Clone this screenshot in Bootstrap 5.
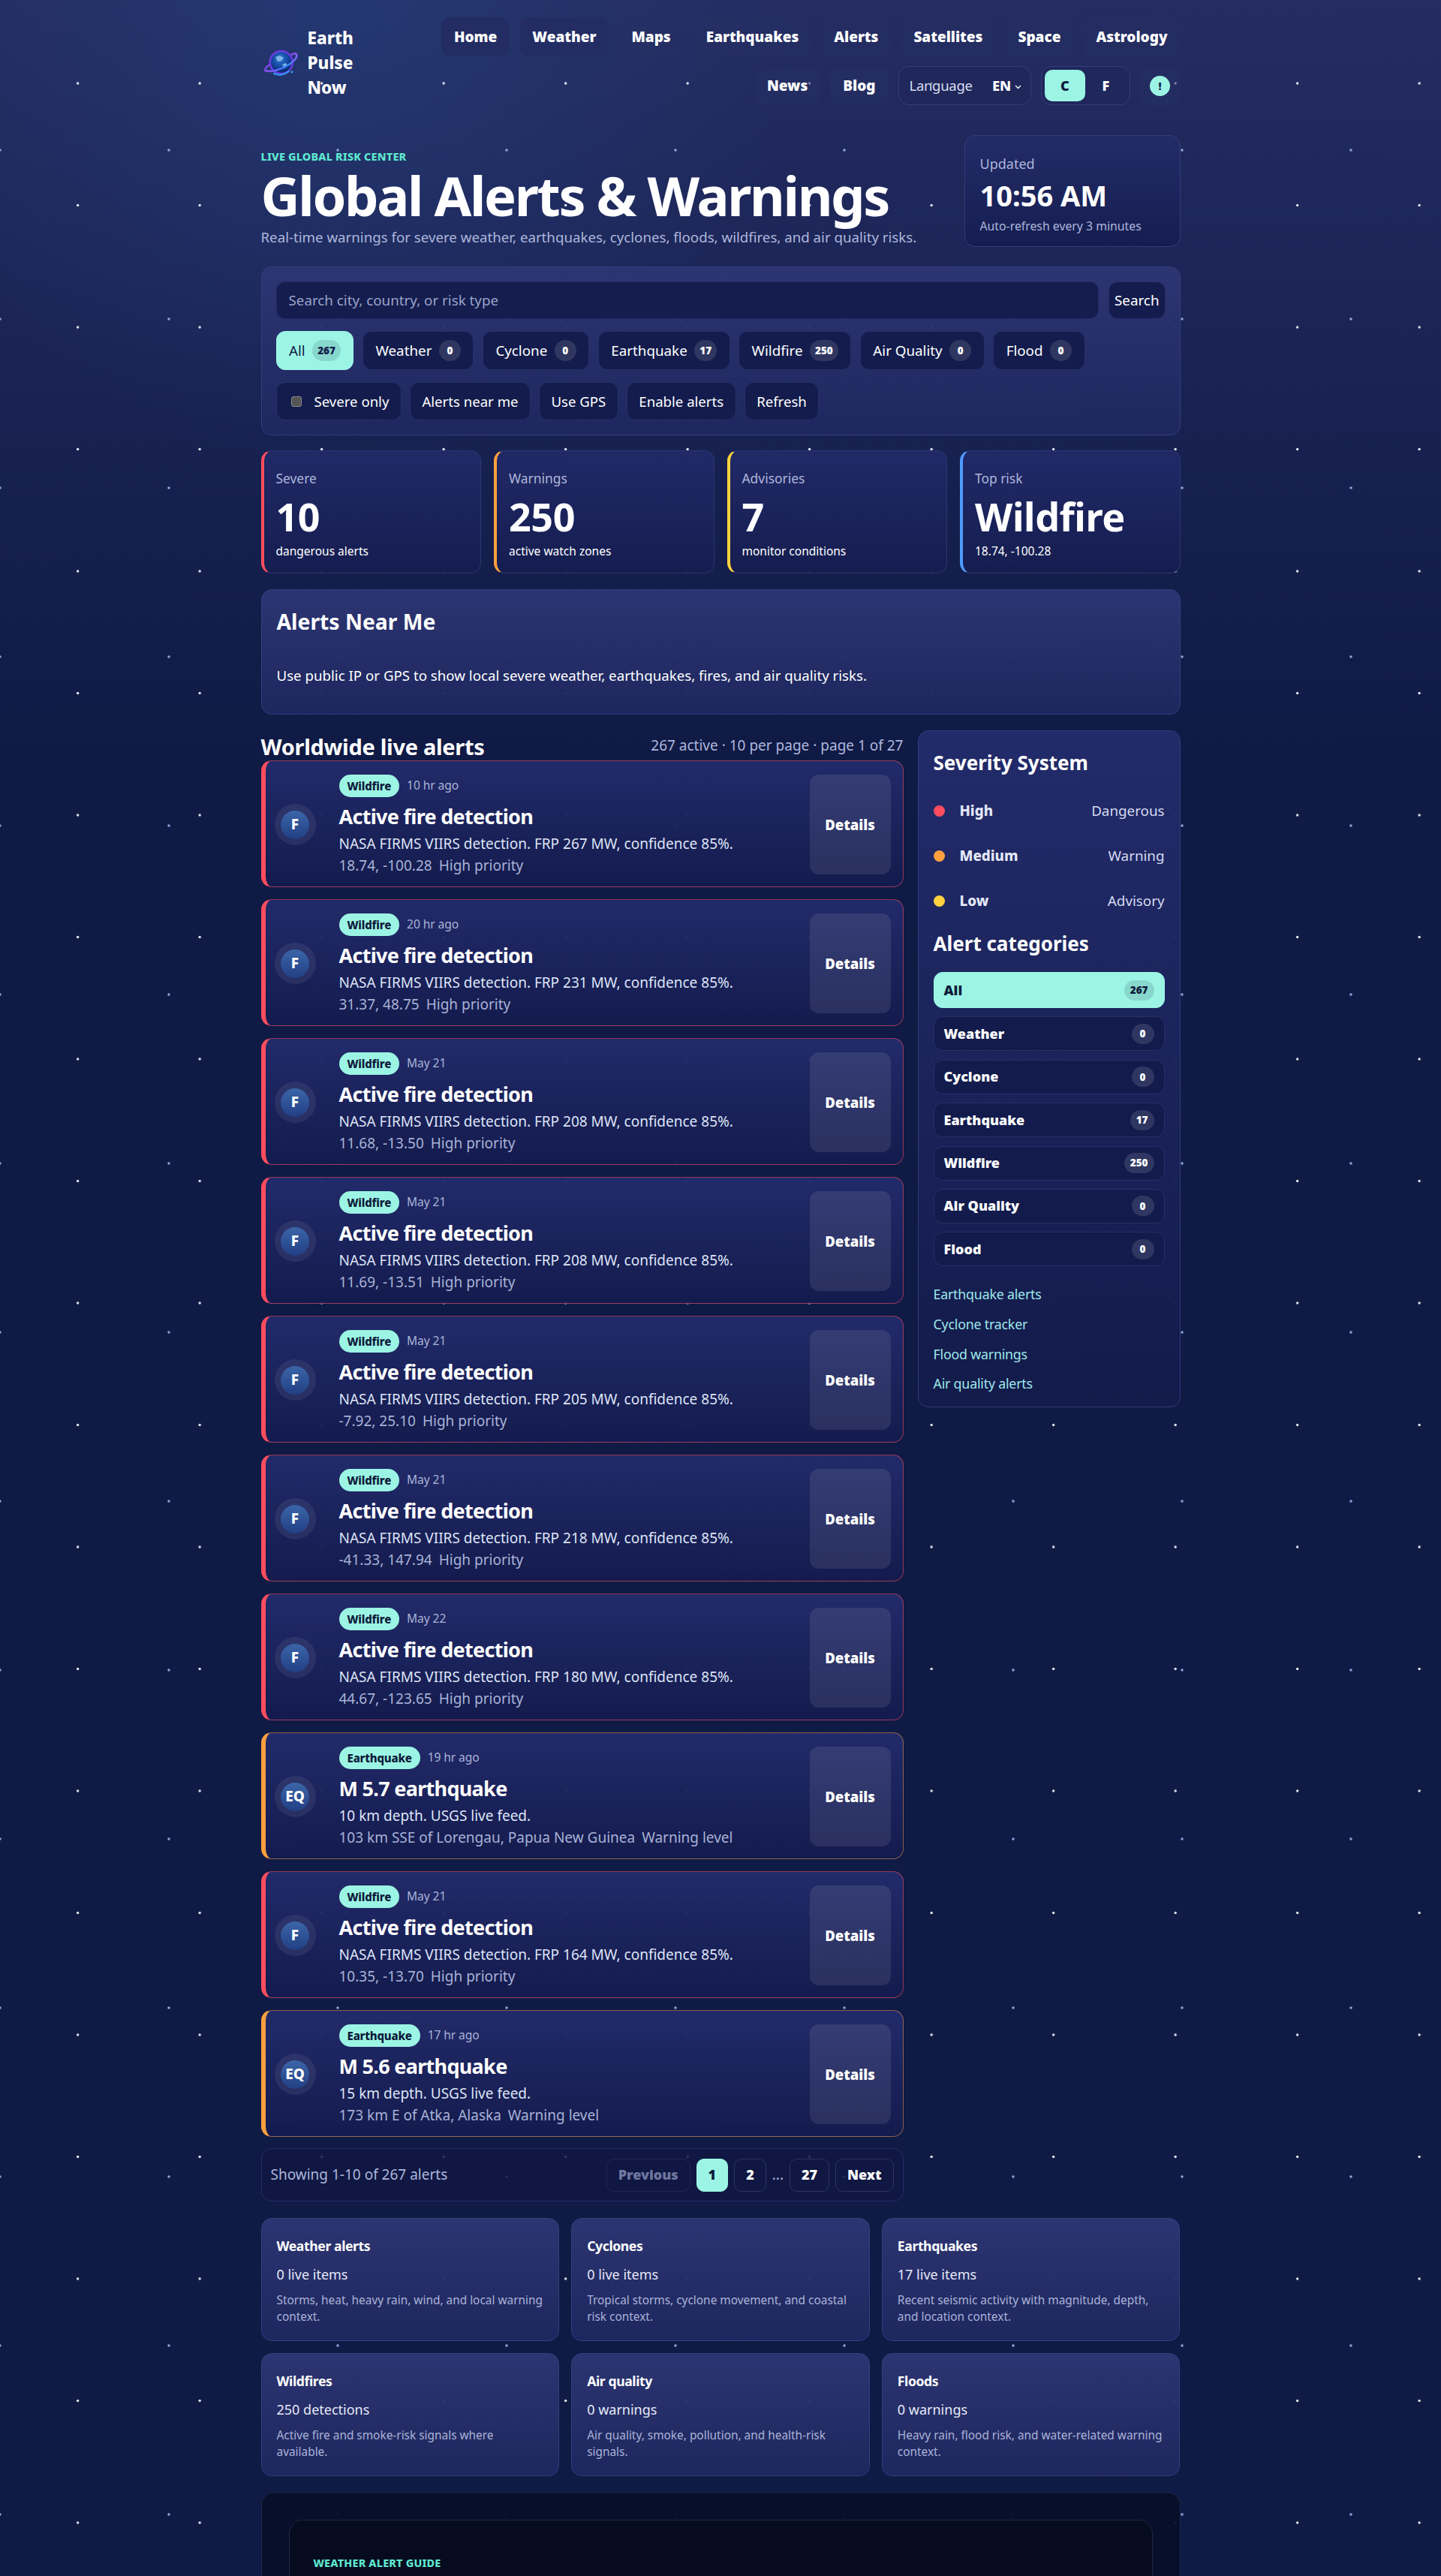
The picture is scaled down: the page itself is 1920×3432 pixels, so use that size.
<!DOCTYPE html>
<html lang="en">
<head>
  <meta charset="UTF-8" />
  <title>Global Alerts &amp; Warnings</title>
  <link href="https://cdn.jsdelivr.net/npm/bootstrap@5.3.3/dist/css/bootstrap.min.css" rel="stylesheet" />
  <style>
    html, body { height: 3432px; overflow: hidden; }
    body {
      font-family: "Noto Sans", "Open Sans", sans-serif;
      color: #fff;
      background-color: #0f1a45;
      background-image:
        radial-gradient(circle at 50% 50%, #f4f6ff 0, #f4f6ff 1px, rgba(255,255,255,0) 2.2px),
        radial-gradient(circle at 50% 50%, #9db8f0 0, #9db8f0 1px, rgba(157,184,240,0) 2.2px),
        radial-gradient(circle at 450px 0, rgba(38,70,135,.45), rgba(38,70,135,0) 620px),
        linear-gradient(180deg, #242c61 0, #0f1a45 1000px);
      background-size: 162.5px 162.5px, 225px 225px, auto, auto;
      background-position: 22.4px 29.75px, -112.5px 87.5px, 0 0, 0 0;
      background-repeat: repeat, repeat, no-repeat, no-repeat;
    }
    .page-wrap { width: 1225px; margin: 0 auto; }

    /* header */
    .site-head { padding-top: 23px; height: 180px; }
    .brand-box { margin-top: 11px; }
    .brand-name { font-size: 22.5px; font-weight: 800; line-height: 33px; margin-left: 13px; }
    .site-nav { width: 989px; row-gap: 13px; column-gap: 13px; }
    .nav-pill {
      height: 52px; padding: 0 17px; border-radius: 12px;
      background: rgba(38,47,100,.55); color: #fff; font-size: 19px; font-weight: 900;
      text-decoration: none; display: flex; align-items: center;
    }
    .nav-pill.is-current { background: #232d64; }
    .lang-box, .unit-box {
      height: 52px; border: 1px solid #343e78; border-radius: 14px; background: rgba(30,38,90,.6);
      display: flex; align-items: center;
    }
    .lang-box { width: 177px; padding: 0 12px 0 14px; font-size: 18.5px; color: #d8ddf0; justify-content: space-between; letter-spacing: -.3px; }
    .lang-box b { color: #fff; font-weight: 800; }
    .unit-box { width: 119px; padding: 0 4px; }
    .unit-btn { width: 55px; height: 42px; border-radius: 10px; font-weight: 900; font-size: 18px; display: flex; align-items: center; justify-content: center; }
    .unit-btn.is-on { background: #9cf5e4; color: #0d1a3a; }
    .info-pill { width: 54px; height: 52px; border-radius: 12px; background: rgba(38,47,100,.55); display: flex; align-items: center; justify-content: center; }
    .info-dot { width: 27px; height: 27px; border-radius: 50%; background: #9cf5e4; color: #10204a; font-size: 14px; font-weight: 900; display: flex; align-items: center; justify-content: center; }

    /* hero */
    .hero-row { height: 175px; }
    .kicker { color: #5fe8d0; font-size: 14.4px; font-weight: 800; text-transform: uppercase; letter-spacing: .2px; line-height: 18px; }
    .hero-title { font-size: 72px; font-weight: 700; line-height: 76px; letter-spacing: -2.35px; margin: 4px 0 0; }
    .hero-sub { font-size: 18.7px; color: #aeb6dc; line-height: 24px; margin: 6px 0 0; }
    .updated-box {
      width: 288px; height: 149px; padding: 20px 20px; border: 1px solid #323c78; border-radius: 14px;
      background: linear-gradient(180deg, #232c68, #151d50);
    }
    .updated-label { font-size: 18px; color: #aeb6dc; line-height: 34px; }
    .updated-time { font-size: 38px; font-weight: 700; line-height: 50px; }
    .updated-note { font-size: 15.8px; color: #aeb6dc; line-height: 32px; }

    /* panels */
    .soft-panel { background: linear-gradient(180deg, rgba(45,54,115,.96), rgba(30,39,95,.96)); border: 1px solid #343e7c; border-radius: 14px; }
    .search-panel { height: 225px; padding: 19px; }
    .search-field { flex: 1; height: 50px; background: #141d4e; border: 1px solid #1f2960; border-radius: 12px; color: #fff; padding: 0 16px; font-size: 18.8px; }
    .search-field::placeholder { color: #9aa3c8; }
    .chip {
      height: 52px; padding: 0 16.5px; border-radius: 12px; background: #131c4c; border: 1px solid #263069;
      color: #fff; font-size: 18.8px; display: flex; align-items: center; gap: 9.5px;
    }
    .chip.is-on { background: #9cf5e4; border-color: #9cf5e4; color: #10204a; }
    .chip-count { min-width: 29px; height: 28px; padding: 0 7px; border-radius: 14px; background: rgba(255,255,255,.12); font-size: 13.5px; font-weight: 900; display: flex; align-items: center; justify-content: center; }
    .chip.is-on .chip-count { background: rgba(16,32,74,.14); }
    .search-btn { height: 50px; padding: 0 7px; }
    .tool-chip { height: 51px; padding: 0 15.5px; font-size: 18.6px; }
    .tick { appearance: none; width: 14px; height: 14px; margin: 0 7px 0 4px; background: #555; border: 1px solid #8a8a8a; border-radius: 3px; }

    .stat-grid { display: grid; grid-template-columns: repeat(4, 1fr); gap: 17px; margin-top: 20px; }
    .stat-tile {
      height: 164px; padding: 18px 16px; border: 1px solid #2c3670; border-left: 4px solid; border-radius: 14px;
      background: linear-gradient(180deg, rgba(33,42,104,.96), rgba(21,29,80,.96));
    }
    .stat-label { font-size: 17.4px; color: #aeb6dc; line-height: 36px; }
    .stat-num { font-size: 52px; font-weight: 700; line-height: 66px; letter-spacing: -.4px; }
    .stat-note { font-size: 15.5px; line-height: 22px; margin-top: 2px; }

    .near-panel { height: 167px; margin-top: 21px; padding: 20px; }
    .near-panel h2 { font-size: 28.3px; font-weight: 700; line-height: 44px; margin: 0 0 36px; }
    .near-panel p { font-size: 18.7px; margin: 0; line-height: 28px; }

    /* alerts */
    .main-grid { display: grid; grid-template-columns: 856px 350px; gap: 19px; margin-top: 21px; align-items: start; }
    .list-head { height: 40px; }
    .list-head h2 { font-size: 29px; font-weight: 700; margin: 0; line-height: 40px; letter-spacing: -.3px; position: relative; top: 2px; }
    .list-count { font-size: 19px; color: #aeb6dc; }
    .alert-stack { display: flex; flex-direction: column; gap: 16px; }
    .alert-tile {
      height: 169px; padding: 18px 16px 16px 12px; display: flex; align-items: center;
      border: 1px solid; border-left-width: 6px; border-radius: 14px;
      background: linear-gradient(180deg, rgba(35,44,107,.97), rgba(20,28,78,.97));
    }
    .tone-high { border-color: rgba(255,77,94,.55); border-left-color: #ff4d5e; }
    .tone-warn { border-color: rgba(255,160,70,.5); border-left-color: #ffa03f; }
    .alert-ico { width: 55px; height: 55px; border-radius: 50%; background: rgba(255,255,255,.07); display: flex; align-items: center; justify-content: center; flex: none; }
    .alert-ico span { width: 38px; height: 38px; border-radius: 50%; background: linear-gradient(180deg, #3b65a8, #223f84); display: flex; align-items: center; justify-content: center; font-size: 19px; font-weight: 800; }
    .alert-body { flex: 1; margin-left: 31px; align-self: stretch; min-width: 0; }
    .tag-line { display: flex; align-items: center; gap: 10px; height: 30px; }
    .tag-pill { height: 30px; padding: 0 11px; border-radius: 15px; background: #9cf5e4; color: #0d1a3a; font-size: 15px; font-weight: 800; letter-spacing: -.2px; display: flex; align-items: center; }
    .tag-time { font-size: 15.6px; color: #aab3d8; letter-spacing: -.1px; }
    .alert-name { font-size: 27px; font-weight: 700; line-height: 38px; margin: 7px 0 3px; letter-spacing: -.7px; }
    .alert-desc { font-size: 19px; color: #dfe4f6; line-height: 28px; margin-top: 1px; }
    .alert-meta { font-size: 19px; color: #a9b2d6; line-height: 30px; }
    .alert-meta span + span { margin-left: 9px; }
    .details-btn { width: 108px; height: 133px; align-self: flex-start; border-radius: 12px; background: rgba(255,255,255,.09); color: #fff; font-weight: 900; font-size: 18.5px; display: flex; align-items: center; justify-content: center; text-decoration: none; flex: none; }

    .pager-bar { height: 71px; margin-top: 15px; padding: 0 12px; border: 1px solid #263069; border-radius: 14px; background: rgba(15,23,66,.85); color: #aeb6dc; font-size: 19px; }
    .page-key { height: 44px; padding: 0 15px; border: 1px solid #2b3569; border-radius: 10px; color: #fff; font-weight: 900; font-size: 18px; display: flex; align-items: center; justify-content: center; }
    .page-key.is-on { background: #9cf5e4; border-color: #9cf5e4; color: #0d1a3a; }
    .page-key.is-off { color: #6f779f; border-color: #1e2758; }

    /* sidebar */
    .side-panel { height: 902px; padding: 20px; border: 1px solid #313b78; border-radius: 14px; background: linear-gradient(180deg, rgba(35,44,107,.97), rgba(19,27,75,.97)); }
    .side-panel h3 { font-size: 26px; font-weight: 700; line-height: 44px; margin: 0; }
    .level-wrap { margin: 12px 0 5px; }
    .level-row { height: 60px; display: flex; align-items: center; font-size: 18.8px; color: #d5daf0; }
    .level-dot { width: 15px; height: 15px; border-radius: 50%; margin-right: 20px; }
    .level-row b { font-weight: 800; color: #e4e8f8; flex: 1; }
    .cat-list { display: flex; flex-direction: column; gap: 11.4px; margin-top: 16px; }
    .cat-item { height: 46px; padding: 0 13px; border: 1px solid #263069; border-radius: 12px; background: #121b4c; font-size: 18px; font-weight: 900; display: flex; align-items: center; justify-content: space-between; }
    .cat-item.is-on { background: #9cf5e4; border-color: #9cf5e4; color: #0d1a3a; height: 48px; }
    .cat-count { min-width: 30px; height: 27px; padding: 0 8px; border-radius: 14px; background: rgba(255,255,255,.12); font-size: 13.5px; display: flex; align-items: center; justify-content: center; }
    .cat-item.is-on .cat-count { background: rgba(16,32,74,.14); }
    .side-links { margin-top: 18px; display: flex; flex-direction: column; }
    .side-links a { color: #9fe8ea; text-decoration: none; font-size: 17.8px; line-height: 39.6px; letter-spacing: -.2px; }

    /* info cards */
    .info-grid { display: grid; grid-template-columns: repeat(3, 1fr); gap: 16px; margin-top: 22px; }
    .info-tile { height: 164px; padding: 20px; }
    .info-tile h4 { font-size: 17.6px; font-weight: 700; line-height: 32px; margin: 0; letter-spacing: -.4px; }
    .info-stat { font-size: 18px; line-height: 32px; margin-top: 6px; color: #e6e9f8; }
    .info-text { font-size: 15.4px; line-height: 22px; margin: 8px 0 0; color: #aab3d8; }

    .guide-outer { height: 160px; margin-top: 21px; padding: 36px 36px 0; background: rgba(8,15,40,.94); border: 1px solid #1e2848; border-radius: 18px; }
    .guide-inner { height: 200px; padding: 48px 32px; background: #060b20; border: 1px solid #1c2644; border-radius: 18px; }
  </style>
</head>
<body>
  <div class="page-wrap">

    <!-- Header -->
    <header class="site-head d-flex justify-content-between align-items-start">
      <div class="brand-box d-flex align-items-center">
        <svg width="45" height="36" viewBox="0 0 45 36" class="ms-1" aria-label="Earth Pulse Now logo">
          <defs>
            <radialGradient id="globeFill" cx="45%" cy="35%" r="70%">
              <stop offset="0" stop-color="#2a7ad6" />
              <stop offset=".6" stop-color="#123f96" />
              <stop offset="1" stop-color="#071c55" />
            </radialGradient>
            <linearGradient id="ringStroke" x1="0" y1="1" x2="1" y2="0">
              <stop offset="0" stop-color="#8a4df0" />
              <stop offset=".5" stop-color="#2f8cf5" />
              <stop offset="1" stop-color="#8a5cf5" />
            </linearGradient>
          </defs>
          <path d="M1.5 28C0 26 4 22 9 19M42.5 6C41 4 38 6 34 8" fill="none" stroke="#8a4df0" stroke-width="2.2" stroke-linecap="round" />
          <circle cx="22.7" cy="17" r="15" fill="url(#globeFill)" stroke="#6b3de0" stroke-width="2.6" />
          <path d="M15 10l6-2 5 3-3 4-5 1zM24 20l5-2 2 3-4 4z" fill="#7fb4ea" />
          <path d="M1.5 28C10 31 24 26 33 20S45 9 42.5 6" fill="none" stroke="url(#ringStroke)" stroke-width="2.6" stroke-linecap="round" />
          <path d="M13 32c6 3 14 2 20-3" fill="none" stroke="#2f9bf5" stroke-width="2.2" stroke-linecap="round" />
          <circle cx="37" cy="30" r="1.4" fill="#3fa5f7" />
        </svg>
        <div class="brand-name">Earth<br />Pulse<br />Now</div>
      </div>

      <nav class="site-nav d-flex flex-wrap justify-content-end">
        <a class="nav-pill is-current" href="#">Home</a>
        <a class="nav-pill is-current" href="#">Weather</a>
        <a class="nav-pill" href="#">Maps</a>
        <a class="nav-pill" href="#">Earthquakes</a>
        <a class="nav-pill" href="#">Alerts</a>
        <a class="nav-pill" href="#">Satellites</a>
        <a class="nav-pill" href="#">Space</a>
        <a class="nav-pill" href="#">Astrology</a>
        <a class="nav-pill" href="#">News</a>
        <a class="nav-pill" href="#">Blog</a>
        <div class="lang-box">Language <b>EN <svg width="9" height="6" viewBox="0 0 9 6"><path d="M1 1l3.5 3.5L8 1" fill="none" stroke="#fff" stroke-width="1.3" /></svg></b></div>
        <div class="unit-box"><span class="unit-btn is-on">C</span><span class="unit-btn">F</span></div>
        <div class="info-pill"><span class="info-dot">!</span></div>
      </nav>
    </header>

    <!-- Hero -->
    <section class="hero-row d-flex justify-content-between align-items-start">
      <div>
        <div class="kicker mt-3 pt-1">Live global risk center</div>
        <h1 class="hero-title">Global Alerts &amp; Warnings</h1>
        <p class="hero-sub">Real-time warnings for severe weather, earthquakes, cyclones, floods, wildfires, and air quality risks.</p>
      </div>
      <div class="updated-box">
        <div class="updated-label">Updated</div>
        <div class="updated-time">10:56 AM</div>
        <div class="updated-note">Auto-refresh every 3 minutes</div>
      </div>
    </section>

    <!-- Search and filters -->
    <section class="soft-panel search-panel">
      <div class="d-flex" style="gap:13px">
        <input class="search-field" type="text" placeholder="Search city, country, or risk type" />
        <div class="chip search-btn">Search</div>
      </div>
      <div id="chipRow" class="d-flex mt-3" style="gap:11.5px"></div>
      <div class="d-flex mt-3" style="gap:11px">
        <div class="chip tool-chip"><input class="tick" type="checkbox" aria-label="Severe only" /> Severe only</div>
        <div class="chip tool-chip">Alerts near me</div>
        <div class="chip tool-chip">Use GPS</div>
        <div class="chip tool-chip">Enable alerts</div>
        <div class="chip tool-chip">Refresh</div>
      </div>
    </section>

    <!-- Stats -->
    <section class="stat-grid">
      <div class="stat-tile" style="border-left-color:#ff4d5e"><div class="stat-label">Severe</div><div class="stat-num">10</div><div class="stat-note">dangerous alerts</div></div>
      <div class="stat-tile" style="border-left-color:#ffa03f"><div class="stat-label">Warnings</div><div class="stat-num">250</div><div class="stat-note">active watch zones</div></div>
      <div class="stat-tile" style="border-left-color:#ffd23f"><div class="stat-label">Advisories</div><div class="stat-num">7</div><div class="stat-note">monitor conditions</div></div>
      <div class="stat-tile" style="border-left-color:#4d9bff"><div class="stat-label">Top risk</div><div class="stat-num">Wildfire</div><div class="stat-note">18.74, -100.28</div></div>
    </section>

    <section class="soft-panel near-panel">
      <h2>Alerts Near Me</h2>
      <p>Use public IP or GPS to show local severe weather, earthquakes, fires, and air quality risks.</p>
    </section>

    <div class="main-grid">
      <!-- Alert list -->
      <div>
        <div class="list-head d-flex justify-content-between align-items-center">
          <h2>Worldwide live alerts</h2>
          <span class="list-count">267 active · 10 per page · page 1 of 27</span>
        </div>
        <div id="alertStack" class="alert-stack"></div>
        <div class="pager-bar d-flex justify-content-between align-items-center">
          <span>Showing 1-10 of 267 alerts</span>
          <div class="d-flex align-items-center gap-2">
            <span class="page-key is-off">Previous</span>
            <span class="page-key is-on">1</span>
            <span class="page-key">2</span>
            <span>...</span>
            <span class="page-key">27</span>
            <span class="page-key">Next</span>
          </div>
        </div>
      </div>

      <!-- Sidebar -->
      <aside class="side-panel">
        <h3>Severity System</h3>
        <div class="level-wrap">
          <div class="level-row"><span class="level-dot" style="background:#ff4d5e"></span><b>High</b>Dangerous</div>
          <div class="level-row"><span class="level-dot" style="background:#ffa03f"></span><b>Medium</b>Warning</div>
          <div class="level-row"><span class="level-dot" style="background:#ffd23f"></span><b>Low</b>Advisory</div>
        </div>
        <h3>Alert categories</h3>
        <div id="catList" class="cat-list"></div>
        <div class="side-links">
          <a href="#">Earthquake alerts</a>
          <a href="#">Cyclone tracker</a>
          <a href="#">Flood warnings</a>
          <a href="#">Air quality alerts</a>
        </div>
      </aside>
    </div>

    <!-- Category summaries -->
    <section class="info-grid">
      <div class="soft-panel info-tile"><h4>Weather alerts</h4><div class="info-stat">0 live items</div><p class="info-text">Storms, heat, heavy rain, wind, and local warning context.</p></div>
      <div class="soft-panel info-tile"><h4>Cyclones</h4><div class="info-stat">0 live items</div><p class="info-text">Tropical storms, cyclone movement, and coastal risk context.</p></div>
      <div class="soft-panel info-tile"><h4>Earthquakes</h4><div class="info-stat">17 live items</div><p class="info-text">Recent seismic activity with magnitude, depth, and location context.</p></div>
      <div class="soft-panel info-tile"><h4>Wildfires</h4><div class="info-stat">250 detections</div><p class="info-text">Active fire and smoke-risk signals where available.</p></div>
      <div class="soft-panel info-tile"><h4>Air quality</h4><div class="info-stat">0 warnings</div><p class="info-text">Air quality, smoke, pollution, and health-risk signals.</p></div>
      <div class="soft-panel info-tile"><h4>Floods</h4><div class="info-stat">0 warnings</div><p class="info-text">Heavy rain, flood risk, and water-related warning context.</p></div>
    </section>

    <section class="guide-outer">
      <div class="guide-inner"><div class="kicker">Weather alert guide</div></div>
    </section>
  </div>

  <script src="https://cdn.jsdelivr.net/npm/bootstrap@5.3.3/dist/js/bootstrap.bundle.min.js"></script>
  <script>
    const cats = [['All', 267], ['Weather', 0], ['Cyclone', 0], ['Earthquake', 17], ['Wildfire', 250], ['Air Quality', 0], ['Flood', 0]];
    const fire = (when, frp, place) => ({ tag: 'Wildfire', when, title: 'Active fire detection', desc: `NASA FIRMS VIIRS detection. FRP ${frp} MW, confidence 85%.`, place, level: 'High priority', tone: 'tone-high', ico: 'F' });
    const quake = (when, title, desc, place) => ({ tag: 'Earthquake', when, title, desc, place, level: 'Warning level', tone: 'tone-warn', ico: 'EQ' });

    const alerts = [
      fire('10 hr ago', 267, '18.74, -100.28'),
      fire('20 hr ago', 231, '31.37, 48.75'),
      fire('May 21', 208, '11.68, -13.50'),
      fire('May 21', 208, '11.69, -13.51'),
      fire('May 21', 205, '-7.92, 25.10'),
      fire('May 21', 218, '-41.33, 147.94'),
      fire('May 22', 180, '44.67, -123.65'),
      quake('19 hr ago', 'M 5.7 earthquake', '10 km depth. USGS live feed.', '103 km SSE of Lorengau, Papua New Guinea'),
      fire('May 21', 164, '10.35, -13.70'),
      quake('17 hr ago', 'M 5.6 earthquake', '15 km depth. USGS live feed.', '173 km E of Atka, Alaska'),
    ];

    document.getElementById('chipRow').innerHTML = cats.map(([name, n], i) =>
      `<div class="chip${i === 0 ? ' is-on' : ''}">${name}<span class="chip-count">${n}</span></div>`).join('');

    document.getElementById('catList').innerHTML = cats.map(([name, n], i) =>
      `<div class="cat-item${i === 0 ? ' is-on' : ''}">${name}<span class="cat-count">${n}</span></div>`).join('');

    document.getElementById('alertStack').innerHTML = alerts.map(a => `
      <article class="alert-tile ${a.tone}">
        <div class="alert-ico"><span>${a.ico}</span></div>
        <div class="alert-body">
          <div class="tag-line"><span class="tag-pill">${a.tag}</span><span class="tag-time">${a.when}</span></div>
          <div class="alert-name">${a.title}</div>
          <div class="alert-desc">${a.desc}</div>
          <div class="alert-meta"><span>${a.place}</span><span>${a.level}</span></div>
        </div>
        <a class="details-btn" href="#">Details</a>
      </article>`).join('');
  </script>
</body>
</html>
